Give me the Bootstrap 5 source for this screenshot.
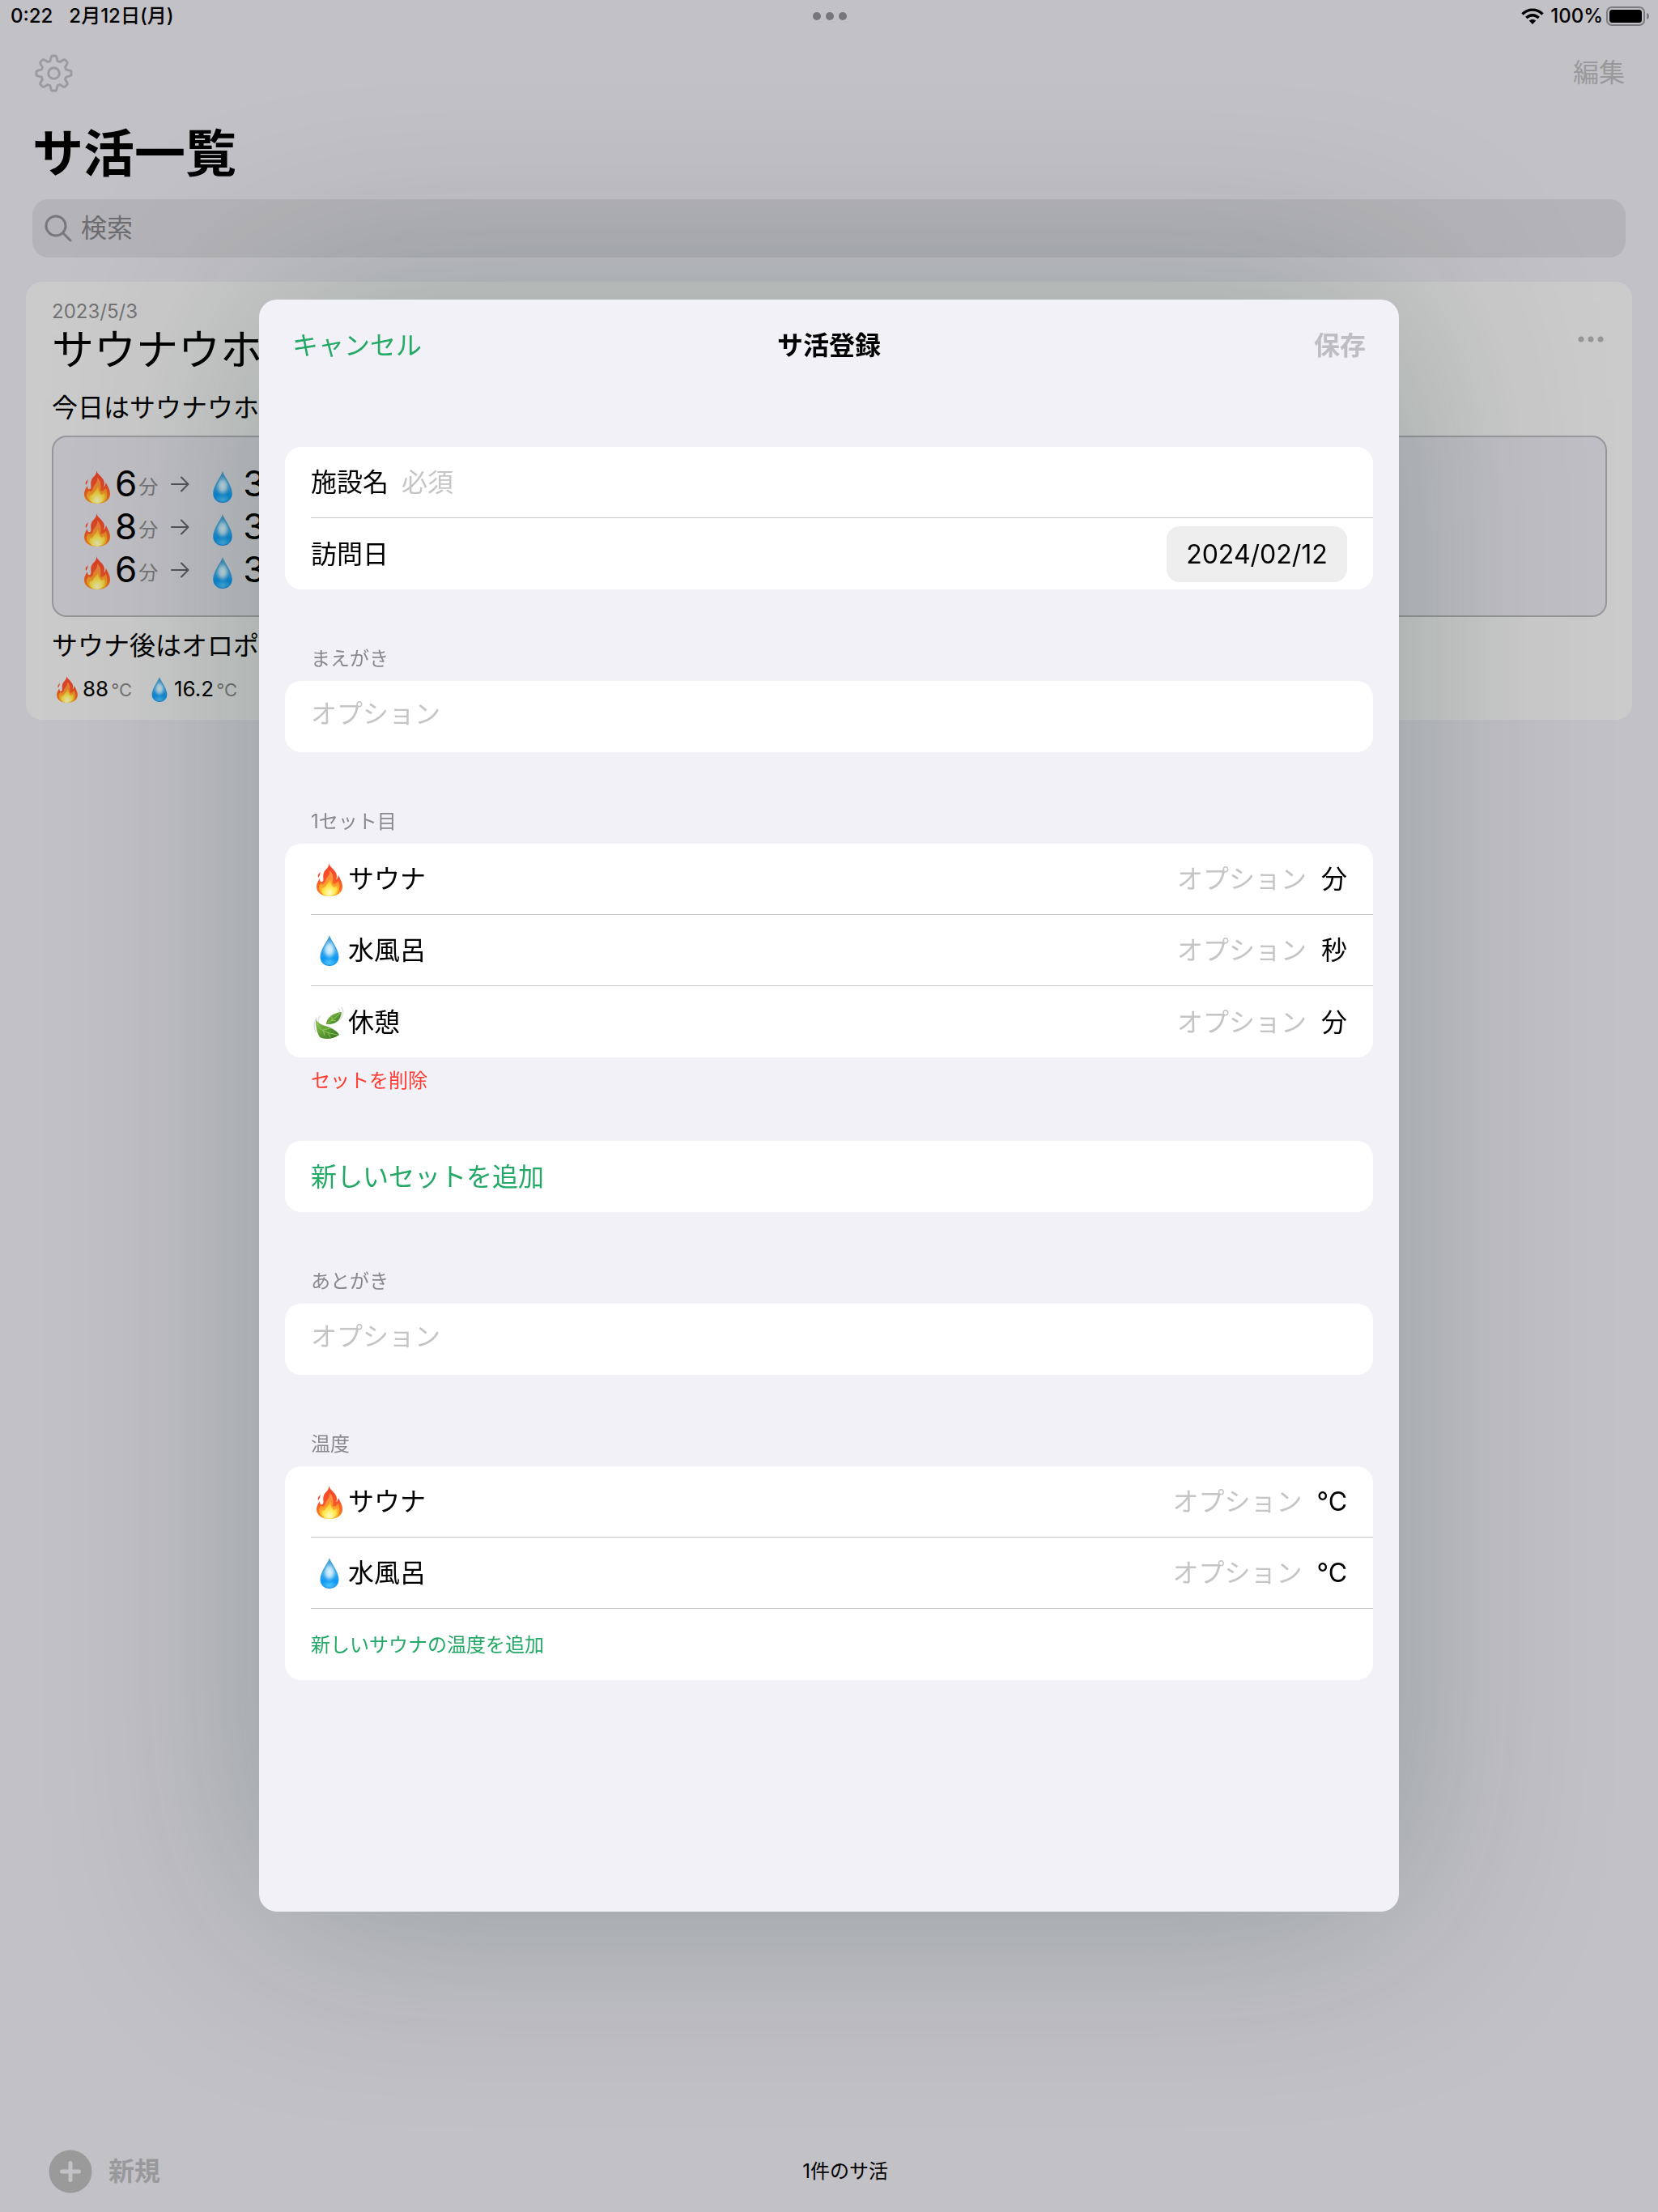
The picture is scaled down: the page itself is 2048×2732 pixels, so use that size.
<!DOCTYPE html>
<html lang="ja">
<head>
<meta charset="utf-8">
<meta name="viewport" content="width=device-width, initial-scale=1">
<title>サ活登録</title>
<link href="https://cdn.jsdelivr.net/npm/bootstrap@5.3.0/dist/css/bootstrap.min.css" rel="stylesheet">
<style>
  body { background: #c2c1c6; color: #000; font-family: Inter, "Noto Sans CJK JP", sans-serif; font-size: 32px; line-height: 40px; overflow: hidden; }
  svg { display: block; flex: none; }
  button { font: inherit; }
  .plain-btn { background: none; border: 0; padding: 0; color: inherit; }
  .dimmed { color: #99999b; }
  .soft { color: #737375; }
  .txt-sm { font-size: 24px; line-height: 30px; }
  .status-bar { height: 40px; padding: 0 10px 0 13px; font-size: 24px; font-weight: 500; }
  .status-bar > div { flex: 1 1 0; }
  .status-time { gap: 20px; }
  .tool-bar { height: 100px; padding: 0 41px 0 43px; }
  .page-title { font-size: 63px; line-height: 98px; font-weight: 700; margin: 0 40px 8px; }
  .search-box { height: 72px; margin: 0 40px 30px; padding: 0 15px; gap: 11px; background: #b4b3b8; border-radius: 20px; color: #6d6d70; }
  .search-box input { font-size: 32px; line-height: 40px; }
  .bare-input { background: none; border: 0; padding: 0; outline: 0; min-width: 0; color: #000; }
  .bare-input::placeholder { color: #c5c5c7; opacity: 1; }
  .search-box .bare-input::placeholder { color: #6d6d70; }
  .visit { margin: 0 32px; padding: 22px 31px 20px 32px; background: #cbcbcb; border-radius: 20px; }
  .visit svg { filter: brightness(.88); }
  .visit-title { font-size: 52px; line-height: 66px; font-weight: 400; margin: 0 0 18px; }
  .visit-more { margin: 37px 3px 0 0; }
  .set-box { margin: 14px 0 16px; padding: 31px 37px 30px; background: #c0bfc5; border: 2px solid #98989b; border-radius: 18px; }
  .set-line { height: 53px; }
  .set-num { font-size: 44px; line-height: 53px; margin-left: 5px; }
  .set-unit { font-size: 24px; margin: 0 15px 0 2px; padding-top: 8px; }
  .set-drop { margin: 8px 8px 0 29px; }
  .temps { margin-top: 16px; padding-left: 6px; font-size: 26px; line-height: 34px; }
  .temps span { margin-left: 6px; }
  .temps small { font-size: 22px; margin: 0 24px 0 3px; }
  .temps .cold { margin-left: 8px; }
  .foot-bar { height: 100px; padding: 0 20px 0 60px; }
  .foot-bar > div { flex: 1 1 0; }

  .modal-dialog.sheet { max-width: 1408px; margin-top: 0; margin-bottom: 0; min-height: 100%; padding-bottom: 2px; }
  .sheet .modal-content { background: #f2f1f7; border: 0; border-radius: 22px; box-shadow: 0 0 280px rgba(0, 44, 28, .25); }
  .sheet .modal-header { border: 0; padding: 37px 41px 105px; }
  .sheet .modal-header > * { flex: 1 1 0; }
  .sheet .modal-title { font-size: 32px; line-height: 40px; font-weight: 700; }
  .sheet .modal-body { padding: 0 32px 286px; }
  .accent { color: #23a866; }
  .save-btn:disabled { color: #bebdc3; font-weight: 700; }
  .group-label { display: block; color: #88888d; padding: 71px 32px 12px; margin: 0; font-size: 24px; line-height: 30px; font-weight: 400; }
  .group-card { background: #fff; border-radius: 20px; padding-left: 32px; }
  .form-line { height: 88px; padding: 2px 32px 0 0; }
  .form-line:not(:last-child) { border-bottom: 1px solid #c6c6c8; }
  .form-line .bare-input { flex: 1 1 0; }
  textarea.bare-input { height: 48px; resize: none; overflow: hidden; line-height: 40px; }
  .emoji-slot { width: 46px; }
  .unit-label { margin-left: 18px; }
  .date-pill { width: 223px; height: 69px; border: 0; border-radius: 16px; background: #eeeeef; font-size: 32px; text-align: center; color: #000; }
  .delete-btn { color: #ff3b30; margin: 14px 32px 59px; }
</style>
</head>
<body>

<svg width="0" height="0" class="position-absolute" aria-hidden="true">
  <defs>
    <linearGradient id="fireOuter" x1="0" y1="0" x2="0" y2="1"><stop offset="0" stop-color="#f4472c"/><stop offset=".45" stop-color="#f9502a"/><stop offset=".8" stop-color="#fb701e"/><stop offset="1" stop-color="#fba01c"/></linearGradient>
    <linearGradient id="fireMid" x1="0" y1="0" x2="0" y2="1"><stop offset="0" stop-color="#ff8a4a"/><stop offset=".55" stop-color="#ff9a2c"/><stop offset="1" stop-color="#ffd22e"/></linearGradient>
    <radialGradient id="fireCore" cx=".5" cy=".8" r=".65"><stop offset="0" stop-color="#fffbd0"/><stop offset=".45" stop-color="#fff064"/><stop offset="1" stop-color="#ffc928"/></radialGradient>
    <linearGradient id="dropBody" x1="0" y1="0" x2="0" y2="1"><stop offset="0" stop-color="#4a9fd0"/><stop offset=".5" stop-color="#3fa9e8"/><stop offset=".75" stop-color="#109af2"/><stop offset="1" stop-color="#1a93e6"/></linearGradient>
    <radialGradient id="dropShine" cx=".5" cy=".58" r=".45"><stop offset="0" stop-color="#e2f5fe"/><stop offset=".45" stop-color="#c4e8fb" stop-opacity=".9"/><stop offset="1" stop-color="#8fd0f5" stop-opacity="0"/></radialGradient>
    <radialGradient id="dropGlow" cx=".5" cy=".8" r=".5"><stop offset="0" stop-color="#4cc4ff"/><stop offset="1" stop-color="#4cc4ff" stop-opacity="0"/></radialGradient>
    <linearGradient id="leafFill" x1="0" y1="0" x2="1" y2="1"><stop offset="0" stop-color="#8cc152"/><stop offset=".5" stop-color="#5f9e35"/><stop offset="1" stop-color="#34701f"/></linearGradient>
  </defs>
  <symbol id="fire" viewBox="0 0 32 41">
    <path fill="url(#fireOuter)" d="M15 0C16 5 25 9 25 16C25 18 24 20 25 20C26 19 26 17 27 15C28 18 32 23 32 29C32 37 25 41 16 41C7 41 0 37 0 29C0 25 2 22 4 19C4 22 5 24 7 23C10 22 7 16 9 12C10 8 16 6 15 0ZM2 18C1 14 3 13 5 11C4 14 4 16 2 18Z"/>
    <path fill="url(#fireMid)" d="M16 9C21 13 21 18 20 25C22 27 25 24 27 22C29 28 29 34 25 38C22 40 19 40 16 40C9 40 3 36 3 30C3 28 4 27 5 25C8 27 10 25 11 22C12 17 17 16 16 9Z"/>
    <path fill="url(#fireCore)" d="M17 20C18 23 18 27 21 30C22 30 24 29 25 28C27 34 23 41 16 41C9 41 5 37 7 31C9 31 10 30 11 29C12 26 16 24 17 20Z"/>
  </symbol>
  <symbol id="drop" viewBox="0 0 23 38">
    <path fill="url(#dropBody)" d="M11.500 0C13 6 23 17 23 26.500C23 33.500 18 38 11.500 38S0 33.500 0 26.500C0 17 10 6 11.500 0Z"/>
    <ellipse cx="11.500" cy="30" rx="10" ry="7" fill="url(#dropGlow)"/>
    <path fill="url(#dropShine)" d="M11.500 2C13 8 21 17 21 26C21 30 2 30 2 26C2 17 10 8 11.500 2Z"/>
  </symbol>
  <symbol id="leaf" viewBox="0 0 38 40">
    <path fill="none" stroke="#dcdddf" stroke-width="1.300" stroke-linecap="round" d="M4 14C1 19 0 25 3 31M8 12C6 16 5 21 8 24M35 1C39 7 36 14 31 18M31 3C33 5 33 6 33 7"/>
    <path fill="url(#leafFill)" d="M3 16C8 26 25 23 32 35C25 41 13 41 8 38C4 32 3 24 3 16Z"/>
    <path fill="url(#leafFill)" d="M16 22C16 14 24 8 35 7C34 17 28 23 16 22Z"/>
    <path fill="none" stroke="#a5cf66" stroke-width=".8" d="M4 20C8 31 18 33 30 35M12 29L14 36M18 32L21 38M12 29L20 27M17 21C22 18 28 14 33 8M23 17L23 13M23 17L28 18"/>
  </symbol>
  <symbol id="arrow" viewBox="0 0 24 24"><path fill="none" stroke="#5f5f60" stroke-width="2" stroke-linecap="round" stroke-linejoin="round" d="M2 12H22.500M14 3.500L22.500 12L14 20.500"/></symbol>
</svg>

<div class="d-flex flex-column min-vh-100">
  <header class="status-bar d-flex align-items-center">
    <div class="d-flex status-time"><span>0:22</span><span>2月12日(月)</span></div>
    <svg width="46" height="12" viewBox="0 0 46 12" fill="#77777b"><circle cx="6" cy="6" r="5"/><circle cx="22" cy="6" r="5"/><circle cx="38" cy="6" r="5"/></svg>
    <div class="d-flex align-items-center justify-content-end">
      <svg width="28" height="20" viewBox="0 0 28 20"><g fill="none" stroke="#000" stroke-width="3.400"><path d="M1.500 7.500C8.500 .3 19.500 .3 26.500 7.500"/><path d="M6.300 12C10.800 7.600 17.200 7.600 21.700 12"/></g><path d="M14 20L9.800 15.600C12 13.400 16 13.400 18.200 15.600Z"/></svg>
      <span class="ms-2 me-1">100%</span>
      <svg width="54" height="24" viewBox="0 0 54 24"><rect x="1" y="1" width="46" height="22" rx="6" fill="none" stroke="#7b7a7e" stroke-width="2"/><rect x="4" y="4" width="40" height="16" rx="3.500"/><path fill="#7b7a7e" d="M50 8C54 9 54 15 50 16Z"/></svg>
    </div>
  </header>

  <nav class="tool-bar d-flex align-items-center justify-content-between dimmed">
    <button class="plain-btn" aria-label="設定">
      <svg width="47" height="47" viewBox="-23.500 -23.500 47 47" fill="none" stroke="#9b9b9d" stroke-width="2.900" stroke-linejoin="round"><path d="M-4.600-15.200L-3.400-19.800Q-3-21.500-1.500-21.500H1.500Q3-21.500 3.400-19.800L4.600-15.200L7.500-14L11.600-16.400Q13.150-17.300 14.200-16.200L16.200-14.200Q17.300-13.150 16.400-11.600L14-7.500L15.200-4.600L19.800-3.400Q21.500-3 21.500-1.500V1.500Q21.500 3 19.800 3.400L15.200 4.600L14 7.500L16.400 11.600Q17.300 13.150 16.200 14.200L14.200 16.200Q13.150 17.300 11.600 16.400L7.500 14L4.600 15.200L3.400 19.800Q3 21.500 1.500 21.500H-1.500Q-3 21.500-3.400 19.800L-4.600 15.200L-7.500 14L-11.600 16.400Q-13.150 17.300-14.200 16.200L-16.200 14.200Q-17.300 13.150-16.400 11.600L-14 7.500L-15.200 4.600L-19.800 3.400Q-21.500 3-21.500 1.500V-1.500Q-21.500-3-19.800-3.400L-15.200-4.600L-14-7.500L-16.400-11.600Q-17.300-13.150-16.200-14.200L-14.200-16.200Q-13.150-17.300-11.600-16.400L-7.500-14Z"/><circle r="6.800"/></svg>
    </button>
    <button class="plain-btn">編集</button>
  </nav>

  <h1 class="page-title">サ活一覧</h1>

  <div class="search-box d-flex align-items-center">
    <svg width="34" height="34" viewBox="0 0 34 34" fill="none" stroke="#78787b" stroke-width="3" stroke-linecap="round"><circle cx="14" cy="14" r="12"/><path d="M23 23L32 32"/></svg>
    <input class="bare-input flex-grow-1" type="search" placeholder="検索" aria-label="検索">
  </div>

  <article class="visit">
    <div class="d-flex justify-content-between">
      <div>
        <div class="txt-sm soft">2023/5/3</div>
        <h2 class="visit-title">サウナウホ</h2>
      </div>
      <button class="plain-btn visit-more align-self-start" aria-label="メニュー">
        <svg width="34" height="24" viewBox="0 0 34 24" fill="#acacac"><circle cx="5" cy="12" r="3.500"/><circle cx="17" cy="12" r="3.500"/><circle cx="29" cy="12" r="3.500"/></svg>
      </button>
    </div>
    <div>今日はサウナウホ</div>
    <div class="set-box">
      <div class="set-line d-flex align-items-center"><svg width="34" height="41" class="mt-2"><use href="#fire"/></svg><span class="set-num">6</span><span class="set-unit soft">分</span><svg width="24" height="24"><use href="#arrow"/></svg><svg width="24" height="39" class="set-drop"><use href="#drop"/></svg><span class="set-num">3</span></div>
      <div class="set-line d-flex align-items-center"><svg width="34" height="41" class="mt-2"><use href="#fire"/></svg><span class="set-num">8</span><span class="set-unit soft">分</span><svg width="24" height="24"><use href="#arrow"/></svg><svg width="24" height="39" class="set-drop"><use href="#drop"/></svg><span class="set-num">3</span></div>
      <div class="set-line d-flex align-items-center"><svg width="34" height="41" class="mt-2"><use href="#fire"/></svg><span class="set-num">6</span><span class="set-unit soft">分</span><svg width="24" height="24"><use href="#arrow"/></svg><svg width="24" height="39" class="set-drop"><use href="#drop"/></svg><span class="set-num">3</span></div>
    </div>
    <div>サウナ後はオロポ</div>
    <div class="temps d-flex align-items-center"><svg width="26" height="33"><use href="#fire"/></svg><span>88<small class="soft">°C</small></span><svg width="20" height="31"><use href="#drop"/></svg><span class="cold">16.2<small class="soft">°C</small></span></div>
  </article>

  <footer class="foot-bar d-flex align-items-center mt-auto">
    <div><button class="plain-btn dimmed fw-bold d-flex align-items-center">
      <svg width="54" height="54" viewBox="0 0 54 54" class="me-3"><circle cx="27" cy="27" r="26.500" fill="#9a9a9b"/><path d="M27 16.500V37.500M16.500 27H37.500" stroke="#c2c1c6" stroke-width="5" stroke-linecap="round"/></svg>
      <span class="ms-1">新規</span></button></div>
    <span class="txt-sm">1件のサ活</span>
    <div></div>
  </footer>
</div>

<div class="modal d-block" tabindex="-1" role="dialog" aria-labelledby="sheetTitle">
  <div class="modal-dialog modal-dialog-centered sheet">
    <form class="modal-content">
      <div class="modal-header">
        <div><button type="button" class="plain-btn accent">キャンセル</button></div>
        <h2 class="modal-title text-center" id="sheetTitle">サ活登録</h2>
        <div class="text-end"><button type="submit" class="plain-btn save-btn" disabled>保存</button></div>
      </div>
      <div class="modal-body">
        <div class="group-card">
          <div class="form-line d-flex align-items-center"><label for="place">施設名</label><input id="place" class="bare-input ms-3" type="text" placeholder="必須"></div>
          <div class="form-line d-flex align-items-center justify-content-between"><label for="day">訪問日</label><input id="day" class="date-pill" type="text" value="2024/02/12" readonly></div>
        </div>

        <label class="group-label" for="intro">まえがき</label>
        <div class="group-card"><div class="form-line d-flex align-items-center"><textarea id="intro" class="bare-input" rows="1" placeholder="オプション"></textarea></div></div>

        <h3 class="group-label">1セット目</h3>
        <div class="group-card">
          <div class="form-line d-flex align-items-center"><span class="emoji-slot"><svg width="46" height="41"><use href="#fire"/></svg></span><label for="s1">サウナ</label><input id="s1" class="bare-input text-end" type="text" placeholder="オプション"><span class="unit-label">分</span></div>
          <div class="form-line d-flex align-items-center"><span class="emoji-slot"><svg width="46" height="38"><use href="#drop"/></svg></span><label for="s2">水風呂</label><input id="s2" class="bare-input text-end" type="text" placeholder="オプション"><span class="unit-label">秒</span></div>
          <div class="form-line d-flex align-items-center"><span class="emoji-slot"><svg width="44" height="40"><use href="#leaf"/></svg></span><label for="s3">休憩</label><input id="s3" class="bare-input text-end" type="text" placeholder="オプション"><span class="unit-label">分</span></div>
        </div>
        <button type="button" class="plain-btn txt-sm delete-btn d-block">セットを削除</button>

        <div class="group-card"><div class="form-line d-flex align-items-center"><button type="button" class="plain-btn accent">新しいセットを追加</button></div></div>

        <label class="group-label" for="outro">あとがき</label>
        <div class="group-card"><div class="form-line d-flex align-items-center"><textarea id="outro" class="bare-input" rows="1" placeholder="オプション"></textarea></div></div>

        <h3 class="group-label">温度</h3>
        <div class="group-card">
          <div class="form-line d-flex align-items-center"><span class="emoji-slot"><svg width="46" height="41"><use href="#fire"/></svg></span><label for="t1">サウナ</label><input id="t1" class="bare-input text-end" type="text" placeholder="オプション"><span class="unit-label">°C</span></div>
          <div class="form-line d-flex align-items-center"><span class="emoji-slot"><svg width="46" height="38"><use href="#drop"/></svg></span><label for="t2">水風呂</label><input id="t2" class="bare-input text-end" type="text" placeholder="オプション"><span class="unit-label">°C</span></div>
          <div class="form-line d-flex align-items-center"><button type="button" class="plain-btn accent txt-sm">新しいサウナの温度を追加</button></div>
        </div>
      </div>
    </form>
  </div>
</div>

<script src="https://cdn.jsdelivr.net/npm/bootstrap@5.3.0/dist/js/bootstrap.bundle.min.js"></script>
</body>
</html>
